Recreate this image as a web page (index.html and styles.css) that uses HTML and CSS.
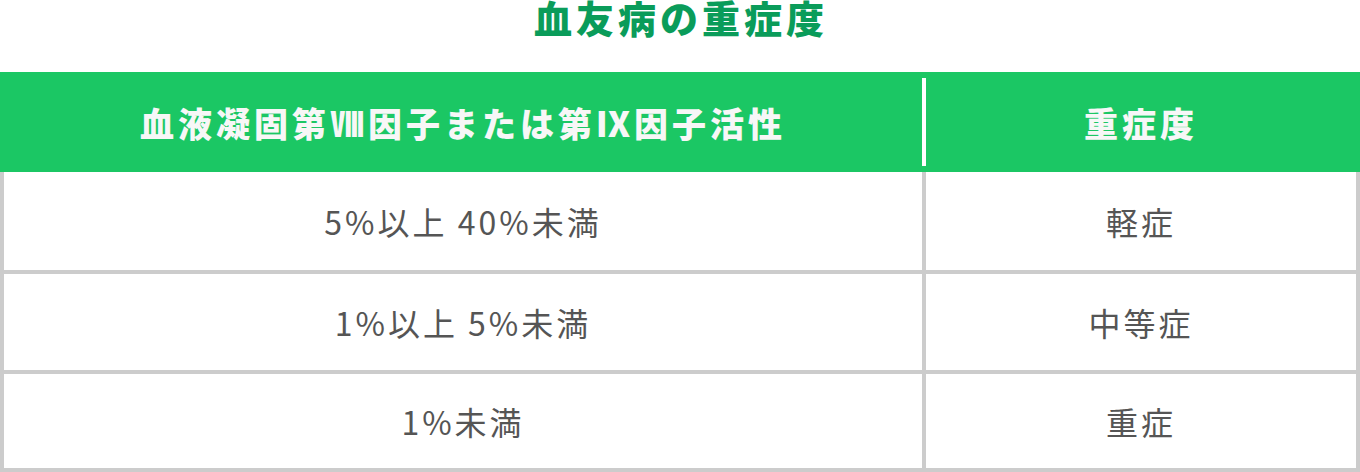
FILE: index.html
```html
<!DOCTYPE html>
<html lang="ja">
<head>
<meta charset="utf-8">
<title>血友病の重症度</title>
<link rel="stylesheet" href="styles.css">
</head>
<body>
<div class="page">
  <h1 class="title">血友病の重症度</h1>
  <div class="table">
    <div class="head">
      <div class="hcell hcell-main">血液凝固第Ⅷ因子または第Ⅸ因子活性</div>
      <div class="hdivider"></div>
      <div class="hcell hcell-side">重症度</div>
    </div>
    <div class="row row-1">
      <div class="cell cell-main">5%以上 40%未満</div>
      <div class="cell">軽症</div>
    </div>
    <div class="row row-2">
      <div class="cell cell-main">1%以上 5%未満</div>
      <div class="cell">中等症</div>
    </div>
    <div class="row row-3">
      <div class="cell cell-main">1%未満</div>
      <div class="cell">重症</div>
    </div>
  </div>
</div>
</body>
</html>
```

FILE: styles.css
```css
html, body {
  margin: 0;
  padding: 0;
  background: #ffffff;
}
.page {
  width: 1360px;
  font-family: "Noto Sans CJK JP", "Noto Sans", sans-serif;
}
.title {
  margin: 0;
  height: 72px;
  line-height: 34px;
  text-align: center;
  font-size: 38px;
  font-weight: 900;
  letter-spacing: 4px;
  color: #0a9c5a;
  padding-left: 2px;
  box-sizing: border-box;
}
.head {
  display: flex;
  height: 100px;
  background: #1bc764;
}
.hcell {
  display: flex;
  align-items: center;
  justify-content: center;
  color: #f7f7f7;
  font-size: 34px;
  font-weight: 900;
  letter-spacing: 4px;
}
.hcell-main {
  width: 922px;
  padding-left: 4px;
  box-sizing: border-box;
}
.hdivider {
  width: 4px;
  margin: 6px 0;
  background: #ffffff;
}
.hcell-side {
  flex: 1;
  padding-right: 4px;
}
.row {
  display: grid;
  grid-template-columns: 922px 430px;
  border-left: 4px solid #cccccc;
  border-right: 4px solid #cccccc;
  border-bottom: 4px solid #cccccc;
}
.row-1 { height: 98px; }
.row-2 { height: 96px; }
.row-3 { height: 94px; }
.cell {
  display: flex;
  align-items: center;
  justify-content: center;
  color: #555555;
  font-size: 32px;
  letter-spacing: 3px;
}
.cell-main {
  border-right: 4px solid #cccccc;
}
```
